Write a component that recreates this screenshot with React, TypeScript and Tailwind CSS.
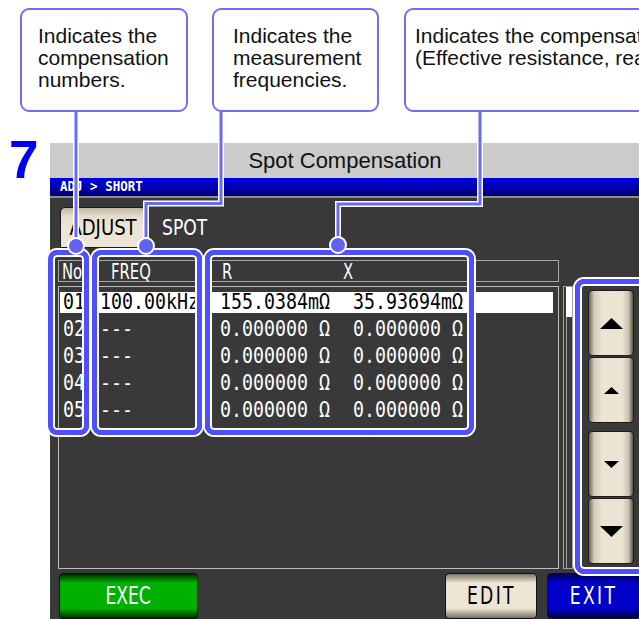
import React from 'react';

const SANS = "font-['Liberation_Sans',Arial,sans-serif]";
const DEV = "font-['DejaVu_Sans',sans-serif]";
const MONO = "font-['DejaVu_Sans_Mono',monospace]";

const ROWS = [
  { no: '01', freq: '100.00kHz', r: '155.0384mΩ', x: '35.93694mΩ' },
  { no: '02', freq: '---', r: '0.000000 Ω', x: '0.000000 Ω' },
  { no: '03', freq: '---', r: '0.000000 Ω', x: '0.000000 Ω' },
  { no: '04', freq: '---', r: '0.000000 Ω', x: '0.000000 Ω' },
  { no: '05', freq: '---', r: '0.000000 Ω', x: '0.000000 Ω' },
];

const BEIGE_H =
  'bg-[linear-gradient(to_right,#6f6757,#d6cebc_12%,#ece4d3_30%,#ece4d3_76%,#c9c0ad_90%,#5c5446)]';

function Callout({ lines, className = '' }: { lines: string[]; className?: string }) {
  return (
    <div
      className={`h-[104px] shrink-0 border-2 border-[#6f6ff5] rounded-[9px] bg-white pt-[15px] text-[21px] leading-[22px] text-[#111] whitespace-nowrap ${SANS} ${className}`}
    >
      {lines.map((l) => (
        <div key={l}>{l}</div>
      ))}
    </div>
  );
}

function Cond({ children, className = '' }: { children: React.ReactNode; className?: string }) {
  return <span className={`inline-block scale-x-[0.78] ${className}`}>{children}</span>;
}

function Tri({ up, big }: { up: boolean; big: boolean }) {
  const w = big ? 23 : 15;
  const h = big ? 11 : 7;
  return (
    <svg width={w} height={h} viewBox={`0 0 ${w} ${h}`}>
      <polygon points={up ? `0,${h} ${w / 2},0 ${w},${h}` : `0,0 ${w},0 ${w / 2},${h}`} fill="#000" />
    </svg>
  );
}

function ScrollBtn({ up, big, className = '' }: { up: boolean; big: boolean; className?: string }) {
  return (
    <div
      className={`h-[66px] flex items-center justify-center rounded-[4px] border border-[#1c1c1c] ${BEIGE_H} ${className}`}
    >
      <Tri up={up} big={big} />
    </div>
  );
}

function Val({ children }: { children: React.ReactNode }) {
  return (
    <span className="pl-[3px] whitespace-pre">
      <span className="inline-block scale-y-[1.18]">{children}</span>
    </span>
  );
}

export default function App() {
  return (
    <div className="relative w-[639px] h-[619px] overflow-hidden bg-white">
      {/* callouts */}
      <div className="flex items-start h-[143px] pl-[20px] pt-[8px]">
        <Callout className="w-[168px] pl-[16px]" lines={['Indicates the', 'compensation', 'numbers.']} />
        <Callout className="ml-[24px] w-[167px] pl-[19px]" lines={['Indicates the', 'measurement', 'frequencies.']} />
        <Callout
          className="ml-[25px] w-[330px] pl-[9px]"
          lines={['Indicates the compensation values.', '(Effective resistance, reactance)']}
        />
      </div>

      <div className="flex">
        <div className={`w-[50px] shrink-0 pl-[9px] -mt-[10px] text-[53px] leading-none font-black text-[#0000f5] ${SANS}`}>
          7
        </div>

        {/* instrument screen */}
        <div className="w-[590px] shrink-0">
          <div className={`h-[35px] bg-[#cbcbcb] flex items-center justify-center text-[22px] text-[#111] ${SANS}`}>
            Spot Compensation
          </div>
          <div
            className={`h-[20px] border-b-2 border-[#8e8e8e] bg-[linear-gradient(to_bottom,#0000e6,#0000b0_55%,#000070)] flex items-center pl-[10px] text-white font-bold text-[12.5px] leading-none ${MONO}`}
          >
            <span className="inline-block scale-y-[1.12] whitespace-pre">ADJ &gt; SHORT</span>
          </div>

          <div className={`h-[421px] bg-[#393939] pt-[9px] ${DEV}`}>
            {/* tabs */}
            <div className="h-[41px] flex items-center">
              <div className="ml-[10px] w-[86px] h-full flex items-center justify-center rounded-t-[5px] border border-[#1a1a1a] bg-[linear-gradient(to_bottom,#bdb4a2,#e4dccb_20%,#ece4d4_45%,#ece4d4)] text-[22px] text-black leading-none">
                <Cond className="scale-x-[0.82]">ADJUST</Cond>
              </div>
              <Cond className="ml-[16px] origin-left text-[22px] text-white leading-none">SPOT</Cond>
            </div>

            {/* header */}
            <div className="mt-[12px] ml-[8px] w-[501px] h-[22px] border border-[#a8a8a8] grid grid-cols-[33px_112px_269px_1fr] text-white text-[19px] leading-none">
              <div className="border-r border-[#a8a8a8] flex items-center pl-[3px]">
                <Cond className="origin-left scale-y-[1.08]">No</Cond>
              </div>
              <div className="border-r border-[#a8a8a8] flex items-center pl-[19px]">
                <Cond className="origin-left scale-y-[1.08]">FREQ</Cond>
              </div>
              <div className="border-r border-[#a8a8a8] flex items-center pl-[18px]">
                <Cond className="origin-left scale-y-[1.08]">R</Cond>
                <Cond className="origin-left scale-y-[1.08] ml-[108px]">X</Cond>
              </div>
              <div />
            </div>

            {/* list + scrollbar + scroll buttons */}
            <div className="mt-[4px] h-[283px] flex">
              <div className={`ml-[8px] w-[501px] border border-[#bdbdbd] pt-[2px] text-[18.3px] leading-none ${MONO}`}>
                {ROWS.map((row, i) => (
                  <div key={row.no} className="h-[27px] py-[3px] pl-[1px] pr-[5px]">
                    <div
                      className={`h-full grid grid-cols-[37px_120px_133px_1fr] items-center ${
                        i === 0 ? 'bg-white text-black' : 'text-white'
                      }`}
                    >
                      <Val>{row.no}</Val>
                      <Val>{row.freq}</Val>
                      <Val>{row.r}</Val>
                      <Val>{row.x}</Val>
                    </div>
                  </div>
                ))}
              </div>

              <div className="ml-[4px] w-[10px] border border-[#a0a0a0] pl-[2px] flex flex-col">
                <div className="h-[30px] bg-white" />
                <div className="flex-1 border-l border-[#a0a0a0]" />
              </div>

              <div className="ml-[15px] w-[46px] pt-[4px] flex flex-col">
                <ScrollBtn up big />
                <ScrollBtn up big={false} className="mt-[1px]" />
                <ScrollBtn up={false} big={false} className="mt-[8px]" />
                <ScrollBtn up={false} big className="mt-[1px]" />
              </div>
            </div>

            {/* bottom buttons */}
            <div className="mt-[4px] h-[46px] flex text-[22px] leading-none">
              <div className="ml-[9px] w-[139px] flex items-center justify-center rounded-[4px] border border-[#111] bg-[linear-gradient(to_bottom,#002a00,#00b000_20%,#00b000_78%,#003000)] text-white">
                <Cond className="scale-y-[1.1]">EXEC</Cond>
              </div>
              <div className="ml-[247px] w-[92px] flex items-center justify-center rounded-[4px] border border-[#111] bg-[linear-gradient(to_bottom,#7e7664,#ece4d4_20%,#ece4d4_78%,#7a7260)] text-black">
                <Cond className="tracking-[3px] scale-y-[1.1]">EDIT</Cond>
              </div>
              <div className="ml-[10px] w-[93px] flex items-center justify-center rounded-[4px] border border-[#111] bg-[linear-gradient(to_bottom,#000050,#0000c8_20%,#0000c8_78%,#000048)] text-white">
                <Cond className="tracking-[3px] scale-y-[1.1]">EXIT</Cond>
              </div>
            </div>
          </div>
        </div>
      </div>

      {/* highlight frames */}
      <div className="absolute left-[48px] top-[250px] w-[41px] h-[185px] rounded-[9px] border-[5px] border-[#4f4fff] shadow-[0_0_0_2px_#fff,inset_0_0_0_2px_#fff]" />
      <div className="absolute left-[92px] top-[250px] w-[110px] h-[185px] rounded-[9px] border-[5px] border-[#4f4fff] shadow-[0_0_0_2px_#fff,inset_0_0_0_2px_#fff]" />
      <div className="absolute left-[205px] top-[250px] w-[269px] h-[185px] rounded-[9px] border-[5px] border-[#4f4fff] shadow-[0_0_0_2px_#fff,inset_0_0_0_2px_#fff]" />
      <div className="absolute left-[575px] top-[279px] w-[80px] h-[295px] rounded-[9px] border-[5px] border-[#4f4fff] shadow-[0_0_0_2px_#fff,inset_0_0_0_2px_#fff]" />

      {/* leader lines */}
      <svg className="absolute inset-0 pointer-events-none" width={639} height={619}>
        <g fill="none" stroke="#fff" strokeWidth={6}>
          <path d="M76 114 V246" />
          <path d="M221 114 V203.5 H146 V246" />
          <path d="M480 114 V204 H338 V245" />
        </g>
        <g fill="none" stroke="#6a6af6" strokeWidth={3}>
          <path d="M76 112 V246" />
          <path d="M221 112 V203.5 H146 V246" />
          <path d="M480 112 V204 H338 V245" />
        </g>
        <g fill="#6262f2" stroke="#fff" strokeWidth={2}>
          <circle cx={76} cy={246} r={8} />
          <circle cx={146} cy={246} r={8} />
          <circle cx={338} cy={245} r={8} />
        </g>
      </svg>
    </div>
  );
}
